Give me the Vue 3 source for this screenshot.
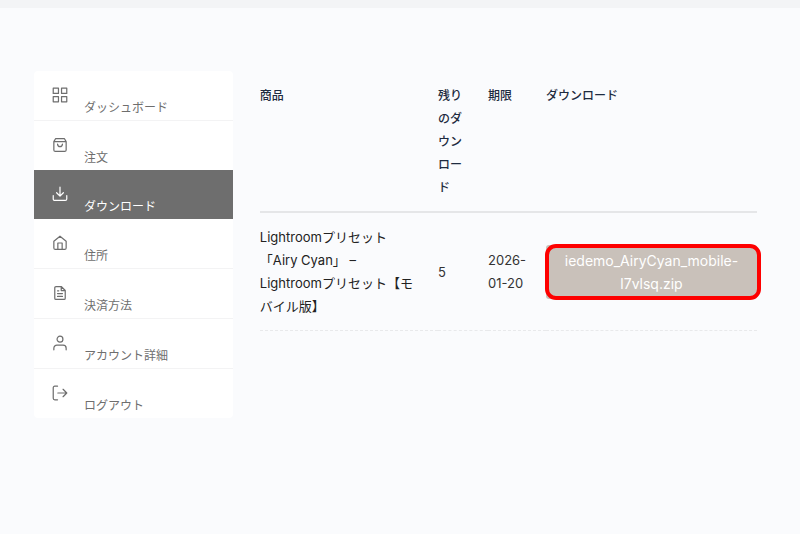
<script setup>
const menu = [
  { label: 'ダッシュボード', icon: 'grid' },
  { label: '注文', icon: 'bag', flush: true },
  { label: 'ダウンロード', icon: 'download', active: true, flush: true },
  { label: '住所', icon: 'home' },
  { label: '決済方法', icon: 'file' },
  { label: 'アカウント詳細', icon: 'user' },
  { label: 'ログアウト', icon: 'logout', flush: true },
]

const icons = {
  grid: 'M1 1h8.500v8.500H1z M14.500 1H23v8.500h-8.500z M1 14.500h8.500V23H1z M14.500 14.500H23V23h-8.500z',
  bag: 'M5 1.500h14l3 5V20a2.500 2.500 0 0 1-2.500 2.500h-15A2.500 2.500 0 0 1 2 20V6.500z M2 6.500h20 M16 10.500c-0.500 5.500-7.500 5.500-8 0',
  download: 'M1 14.500v5.500a2.500 2.500 0 0 0 2.500 2.500h17a2.500 2.500 0 0 0 2.500-2.500v-5.500 M6.500 10l5.500 5.500 5.500-5.500 M12 15V1',
  home: 'M2 9L12 1l10 8v11a2.500 2.500 0 0 1-2.500 2.500h-15A2.500 2.500 0 0 1 2 20z M8.500 22V12h7v10',
  file: 'M14 1.500H5.500a2 2 0 0 0-2 2v17a2 2 0 0 0 2 2h13a2 2 0 0 0 2-2V8z M14 1.500V8h6.500 M8 13h8 M8 17.500h8 M8 8.500h2',
  user: 'M2 23v-2.500a5 5 0 0 1 5-5h10a5 5 0 0 1 5 5V23 M12 1a4.750 4.750 0 1 0 0 9.500A4.750 4.750 0 0 0 12 1z',
  logout: 'M8 23H3.500A2.500 2.500 0 0 1 1 20.500v-17A2.500 2.500 0 0 1 3.500 1H8 M17 6l6 6-6 6 M22.500 12H8.500',
}

const downloads = [
  {
    product: 'Lightroomプリセット「Airy Cyan」 – Lightroomプリセット【モバイル版】',
    remaining: 5,
    expires: '2026-01-20',
    file: 'iedemo_AiryCyan_mobile-l7vlsq.zip',
  },
]
</script>

<template>
  <div class="page">
    <main class="account">
      <nav class="menu" aria-label="アカウント">
        <a
          v-for="item in menu"
          :key="item.label"
          href="#"
          class="menu-item"
          :class="{ active: item.active, flush: item.flush }"
          :aria-current="item.active ? 'page' : undefined"
        >
          <svg class="icon" viewBox="-1 -1 26 26" aria-hidden="true">
            <path :d="icons[item.icon]" />
          </svg>
          <span class="menu-label">{{ item.label }}</span>
        </a>
      </nav>

      <section class="content">
        <table class="downloads">
          <colgroup>
            <col class="col-product" />
            <col class="col-remaining" />
            <col class="col-expires" />
            <col class="col-file" />
          </colgroup>
          <thead>
            <tr>
              <th scope="col">商品</th>
              <th scope="col">残りのダウンロード</th>
              <th scope="col">期限</th>
              <th scope="col">ダウンロード</th>
            </tr>
          </thead>
          <tbody>
            <tr v-for="row in downloads" :key="row.file">
              <td><a href="#" class="product">{{ row.product }}</a></td>
              <td>{{ row.remaining }}</td>
              <td>{{ row.expires }}</td>
              <td class="file-cell">
                <a href="#" class="file-button">{{ row.file }}</a>
              </td>
            </tr>
          </tbody>
        </table>
      </section>
    </main>
  </div>
</template>

<style>
body {
  background: #fafbfd;
}
</style>

<style scoped>
.page {
  border-top: 8px solid #f3f4f6;
  font-family: Inter, 'Noto Sans CJK JP', sans-serif;
  font-size: 13px;
  line-height: 23px;
  color: #333;
}

.account {
  display: grid;
  grid-template-columns: 2fr 5fr;
  gap: 27px;
  align-items: start;
  padding: 63px 43px 63px 34px;
}

.menu {
  border-radius: 4px;
  overflow: hidden;
  background: #fff;
}

.menu-item {
  display: flex;
  align-items: flex-start;
  gap: 16px;
  padding: 16px 18px 1px;
  border-bottom: 1px solid #f3f3f4;
  color: #6e6e6e;
  font-size: 12px;
  text-decoration: none;
}

.menu-item.flush {
  border-bottom: 0;
}

.menu-item.active {
  background: #6e6e6e;
  color: #fff;
}

.icon {
  flex: none;
  width: 16px;
  height: 16px;
  fill: none;
  stroke: currentColor;
  stroke-width: 2;
  stroke-linecap: round;
  stroke-linejoin: round;
}

.menu-label {
  padding-top: 9px;
}

.downloads {
  width: 100%;
  table-layout: fixed;
  border-collapse: collapse;
}

.col-remaining {
  width: 50px;
}

.col-expires {
  width: 58px;
}

.col-file {
  width: 211px;
}

th,
td {
  padding: 13px 20px 12px 0;
  text-align: left;
}

th {
  border-bottom: 2px solid #e5e6e8;
  color: #1e2b40;
  font-size: 12px;
  font-weight: 500;
  vertical-align: top;
}

td {
  border-bottom: 1px dashed #e8e9eb;
  vertical-align: middle;
}

.product {
  color: #222;
  text-decoration: none;
}

.file-cell {
  padding-right: 0;
}

.file-button {
  position: relative;
  display: block;
  padding: 4px 16px;
  border-radius: 3px;
  background: #c9c1ba;
  color: #fff;
  font-size: 14px;
  text-align: center;
  text-decoration: none;
}

.file-button::after {
  content: '';
  position: absolute;
  inset: -1px -4px -1px -1px;
  border: 4px solid #fe0000;
  border-radius: 11px;
}
</style>
